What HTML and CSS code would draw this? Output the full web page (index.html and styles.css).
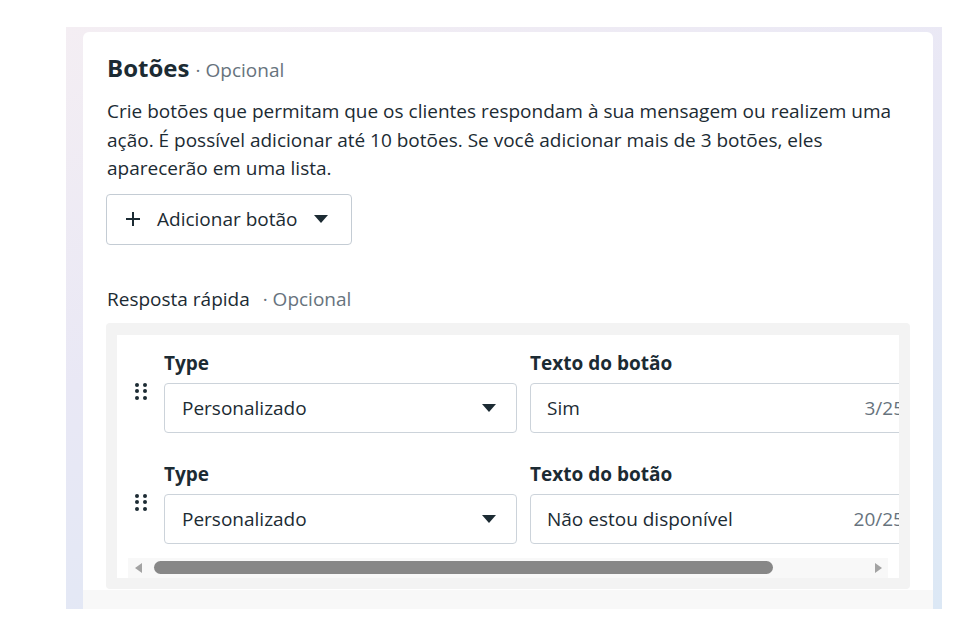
FILE: index.html
```html
<!DOCTYPE html>
<html lang="pt-BR">
<head>
<meta charset="UTF-8">
<meta name="viewport" content="width=device-width, initial-scale=1.0">
<title>Botões</title>
<link rel="stylesheet" href="styles.css">
</head>
<body>

<div class="frame">
  <div class="card">
    <div class="card-body">
      <h2 class="title">Botões <span class="optional">· Opcional</span></h2>
      <p class="desc">Crie botões que permitam que os clientes respondam à sua mensagem ou realizem uma ação. É possível adicionar até 10 botões. Se você adicionar mais de 3 botões, eles aparecerão em uma lista.</p>

      <button class="add-btn" type="button">
        <svg class="plus" width="14" height="14" viewBox="0 0 14 14"><path d="M7 0v14M0 7h14" stroke="#1c2b33" stroke-width="2"/></svg>
        <span>Adicionar botão</span>
        <svg class="caret" width="14" height="8" viewBox="0 0 14 8"><path d="M0 0h14L7 8z" fill="#1c2b33"/></svg>
      </button>

      <div class="sub-label">Resposta rápida <span class="optional spaced">· Opcional</span></div>

      <div class="reply-box">
        <div class="reply-inner">
          <div class="rows">
            <div class="row">
              <div class="handle"><i></i><i></i><i></i><i></i><i></i><i></i></div>
              <label class="field-label type-label">Type</label>
              <label class="field-label text-label">Texto do botão</label>
              <div class="select">
                <span>Personalizado</span>
                <svg width="14" height="8" viewBox="0 0 14 8"><path d="M0 0h14L7 8z" fill="#1c2b33"/></svg>
              </div>
              <div class="input">
                <span>Sim</span>
                <span class="count">3/25</span>
              </div>
            </div>
            <div class="row">
              <div class="handle"><i></i><i></i><i></i><i></i><i></i><i></i></div>
              <label class="field-label type-label">Type</label>
              <label class="field-label text-label">Texto do botão</label>
              <div class="select">
                <span>Personalizado</span>
                <svg width="14" height="8" viewBox="0 0 14 8"><path d="M0 0h14L7 8z" fill="#1c2b33"/></svg>
              </div>
              <div class="input">
                <span>Não estou disponível</span>
                <span class="count">20/25</span>
              </div>
            </div>
          </div>
          <div class="scrollbar">
            <svg width="7" height="10" viewBox="0 0 7 10"><path d="M7 0v10L0 5z" fill="#a3a3a3"/></svg>
            <div class="thumb"></div>
            <svg class="arrow-right" width="7" height="10" viewBox="0 0 7 10"><path d="M0 0v10l7-5z" fill="#a3a3a3"/></svg>
          </div>
        </div>
      </div>
    </div>
    <div class="card-foot"></div>
  </div>
</div>

</body>
</html>
```

FILE: styles.css
```css
body {
  margin: 0;
  background-color: #fff;
  font-family: "Open Sans", "Noto Sans", sans-serif;
  color: #1c2b33;
}
.frame {
  width: 850px;
  margin: 27px 0 0 66px;
  padding: 5px 9px 0 17px;
  background: linear-gradient(160deg, #f4eef3 0%, #e9e8f5 40%, #dce8f5 100%);
}
.card {
  background-color: #fff;
  border-radius: 6px 6px 0 0;
}
.card-body {
  padding: 20px 23px 1px;
}
.card-foot {
  height: 19px;
  background-color: #f8f8f8;
}
.title {
  margin: 0;
  padding-left: 1px;
  font-size: 24px;
  line-height: 32px;
  font-weight: 700;
}
.optional {
  font-size: 19px;
  font-weight: 400;
  color: #67737d;
}
.optional.spaced {
  margin-left: 8px;
}
.desc {
  margin: 11px 0 0;
  padding-left: 1px;
  font-size: 19px;
  line-height: 28.5px;
}
.add-btn {
  display: flex;
  align-items: center;
  width: 246px;
  height: 51px;
  margin-top: 11px;
  padding: 0 0 0 19px;
  border: 1px solid #c4ccd4;
  border-radius: 4px;
  background-color: #fff;
  font-family: inherit;
  font-size: 19px;
  font-weight: 500;
  color: #1c2b33;
}
.add-btn .plus {
  margin-right: 17px;
}
.add-btn .caret {
  margin-left: 16px;
}
.sub-label {
  margin-top: 42px;
  padding-left: 1px;
  font-size: 19px;
  line-height: 24px;
}
.reply-box {
  margin-top: 12px;
  padding: 12px 11px 11px;
  background-color: #f3f3f3;
  border-radius: 4px;
}
.reply-inner {
  padding: 16px 11px 0;
  background-color: #fff;
  overflow: hidden;
}
.rows {
  display: flex;
  flex-direction: column;
  gap: 29px;
}
.row {
  display: grid;
  grid-template-columns: 23px 353px 391px;
  grid-template-rows: 24px 50px;
  column-gap: 13px;
  row-gap: 8px;
}
.handle {
  grid-column: 1;
  grid-row: 2;
  display: grid;
  grid-template-columns: 4px 4px;
  grid-auto-rows: 4px;
  gap: 2.5px 4px;
  align-self: start;
  margin: 0 0 0 7px;
}
.handle i {
  width: 4px;
  height: 4px;
  border-radius: 50%;
  background-color: #1c2b33;
}
.field-label {
  font-size: 19px;
  line-height: 24px;
  font-weight: 700;
}
.type-label {
  grid-column: 2;
  grid-row: 1;
}
.text-label {
  grid-column: 3;
  grid-row: 1;
}
.select,
.input {
  grid-row: 2;
  display: flex;
  align-items: center;
  justify-content: space-between;
  border: 1px solid #ccd3da;
  border-radius: 4px;
  font-size: 19px;
}
.select {
  grid-column: 2;
  padding: 0 20px 0 17px;
}
.input {
  grid-column: 3;
  padding: 0 16px;
}
.count {
  color: #67737d;
}
.scrollbar {
  display: flex;
  align-items: center;
  height: 20px;
  margin-top: 14px;
  padding: 0 6px 0 7px;
  background-color: #f8f8f8;
}
.thumb {
  width: 619px;
  height: 13px;
  margin-left: 12px;
  border-radius: 7px;
  background-color: #878787;
}
.arrow-right {
  margin-left: auto;
}
```
